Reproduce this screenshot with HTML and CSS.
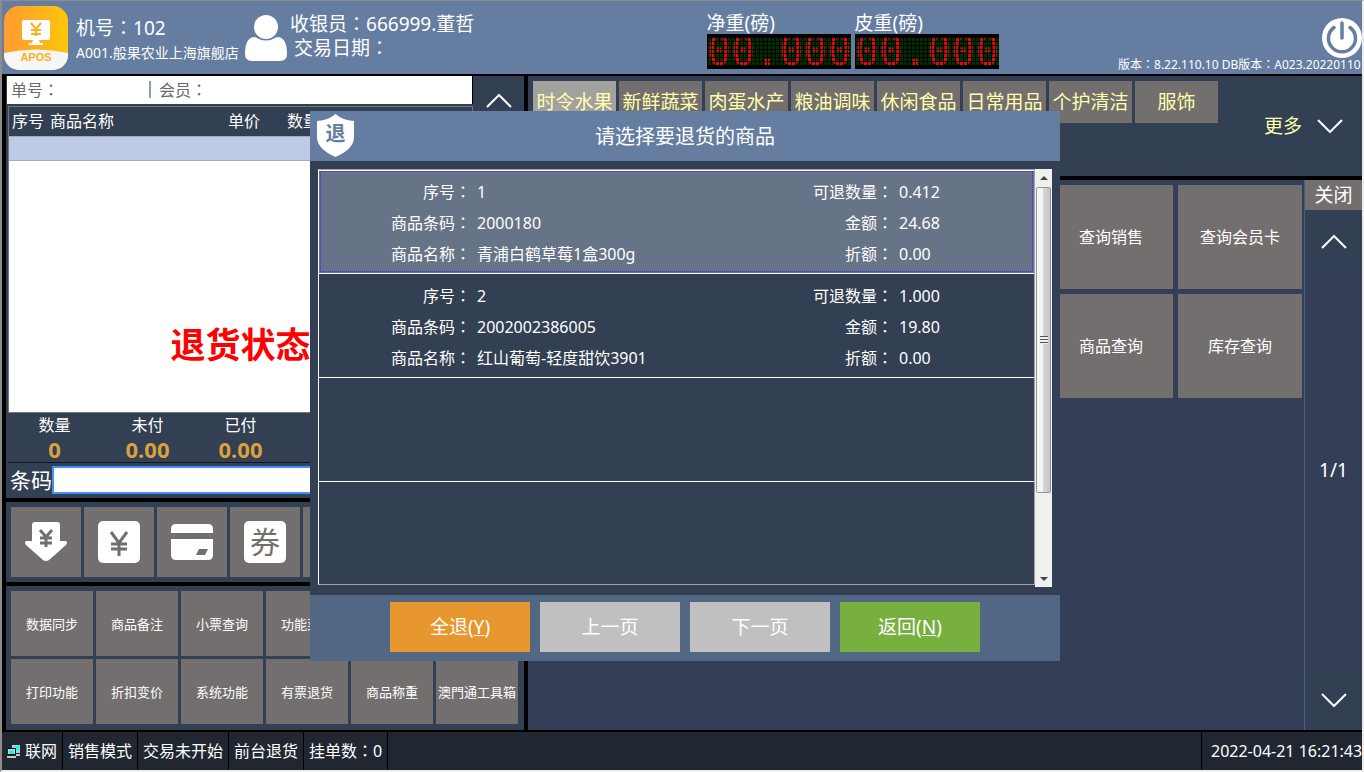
FILE: index.html
```html
<!DOCTYPE html>
<html lang="zh-CN">
<head>
  <meta charset="UTF-8">
  <meta name="viewport" content="width=device-width, initial-scale=1">
  <title>APOS 收银</title>
  <link rel="stylesheet" href="styles.css">
</head>
<body>
<div class="app">

  <header class="top">
    <svg class="logo" viewBox="0 0 64 64">
      <defs>
        <linearGradient id="g"><stop offset="0.1" stop-color="#ff9f2e"/><stop offset="1" stop-color="#ffc60a"/></linearGradient>
        <clipPath id="r"><rect width="64" height="64" rx="15"/></clipPath>
      </defs>
      <g clip-path="url(#r)">
        <rect width="64" height="64" fill="url(#g)"/>
        <path d="M0 47Q32 40 64 47V64H0Z" fill="#f6f6f6"/>
      </g>
      <rect x="18" y="14" width="28" height="20" rx="2" fill="#fff"/>
      <path d="M29 34h6l1 3h3v2H25v-2h3z" fill="#fff"/>
      <path d="M27 17l5 6 5-6M27 24h10M27 28h10M32 23v7" stroke="#fbb01c" stroke-width="2" fill="none"/>
      <text x="32" y="55" class="logo-text">APOS</text>
    </svg>
    <div class="machine">
      <div class="big">机号<i lang="zh-TW">：</i>102</div>
      <div class="shop">A001.般果农业上海旗舰店</div>
    </div>
    <svg class="user" viewBox="0 0 42 46">
      <circle cx="21" cy="12" r="12" fill="#fff"/>
      <path d="M10 22Q21 29 32 22Q42 22 42 39Q42 46 35 46H7Q0 46 0 39Q0 22 10 22Z" fill="#fff"/>
    </svg>
    <div class="cashier">
      <div class="big">收银员<i lang="zh-TW">：</i>666999.董哲</div>
      <div class="big date">交易日期<i lang="zh-TW">：</i></div>
    </div>
    <div class="weights">
      <div class="weight"><div class="big">净重(磅)</div><div class="led">00.000</div></div>
      <div class="weight"><div class="big">皮重(磅)</div><div class="led">00.000</div></div>
    </div>
    <div class="sys">
      <button class="power" aria-label="退出">
        <svg viewBox="0 0 40 40">
          <circle cx="20" cy="20" r="20" fill="#fff"/>
          <path d="M12 9.500A13.500 13.500 0 1 0 28 9.500M20 5V20" fill="none" stroke="#647da1" stroke-width="3.500" stroke-linecap="round"/>
        </svg>
      </button>
      <div class="version">版本<i lang="zh-TW">：</i>8.22.110.10 DB版本<i lang="zh-TW">：</i>A023.20220110</div>
    </div>
  </header>

  <main class="main">
    <section class="left">
      <div class="panel sale">
        <div class="order">
          <div class="order-info"><span class="order-no">单号<i lang="zh-TW">：</i></span><span class="order-vip">会员<i lang="zh-TW">：</i></span></div>
          <button class="up" aria-label="上移"><svg class="chev" viewBox="0 0 26 14"><path d="M1 13L13 1L25 13"/></svg></button>
        </div>
        <div class="goods">
          <table>
            <thead><tr><th class="c-no">序号</th><th class="c-name">商品名称</th><th class="c-price">单价</th><th>数量</th></tr></thead>
            <tbody><tr><td></td><td></td><td></td><td></td></tr></tbody>
          </table>
          <div class="state">退货状态</div>
        </div>
        <div class="totals">
          <div>数量<b>0</b></div>
          <div>未付<b>0.00</b></div>
          <div>已付<b>0.00</b></div>
        </div>
        <div class="scan">
          <label for="barcode">条码</label>
          <input type="text" id="barcode">
        </div>
      </div>

      <div class="panel pays">
        <button aria-label="现金"><svg viewBox="0 0 42 42">
          <path d="M7 4Q7 1 10 1H32Q35 1 35 4V20H41Q43 21 41 24L24 39Q21 41 18 39L1 24Q-1 21 1 20H7Z" fill="#fff"/>
          <path d="M15 9l6 7 6-7M15 17h12M15 22h12M21 16v10" fill="none" stroke="#736f6e" stroke-width="3"/></svg></button>
        <button aria-label="人民币"><svg viewBox="0 0 42 42">
          <rect width="42" height="42" rx="5" fill="#fff"/>
          <path d="M13 11l8 11 8-11M13 23h16M13 28h16M21 22v13" fill="none" stroke="#736f6e" stroke-width="3"/></svg></button>
        <button aria-label="银行卡"><svg viewBox="0 0 42 42">
          <path d="M0 12V8Q0 3 5 3H37Q42 3 42 8V12ZM0 18H42V34Q42 39 37 39H5Q0 39 0 34Z" fill="#fff"/>
          <path d="M28 28h9l-3 6h-9z" fill="#736f6e"/></svg></button>
        <button class="coupon"><span>券</span></button>
        <button aria-label="其他支付"></button>
      </div>

      <div class="panel funcs">
        <div class="func-row">
          <button>数据同步</button>
          <button>商品备注</button>
          <button>小票查询</button>
          <button>功能菜单</button>
        </div>
        <div class="func-row">
          <button>打印功能</button>
          <button>折扣变价</button>
          <button>系统功能</button>
          <button>有票退货</button>
          <button>商品称重</button>
          <button>澳門通工具箱</button>
        </div>
      </div>
    </section>

    <section class="right">
      <div class="cats">
        <nav class="tabs">
          <button class="on">时令水果</button>
          <button>新鲜蔬菜</button>
          <button>肉蛋水产</button>
          <button>粮油调味</button>
          <button>休闲食品</button>
          <button>日常用品</button>
          <button>个护清洁</button>
          <button>服饰</button>
        </nav>
        <button class="more">更多<svg class="chev" viewBox="0 0 26 14"><path d="M1 1L13 13L25 1"/></svg></button>
      </div>
      <div class="work">
        <div class="keys">
          <button class="k5">查询销售</button>
          <button>查询会员卡</button>
          <button class="k5">商品查询</button>
          <button>库存查询</button>
        </div>
        <div class="pager">
          <button class="close">关闭</button>
          <button class="prev" aria-label="上一页"><svg class="chev" viewBox="0 0 26 14"><path d="M1 13L13 1L25 13"/></svg></button>
          <span>1/1</span>
          <button class="next" aria-label="下一页"><svg class="chev" viewBox="0 0 26 14"><path d="M1 1L13 13L25 1"/></svg></button>
        </div>
      </div>
    </section>
  </main>

  <footer class="status">
    <div class="net">
      <svg viewBox="0 0 13 13" shape-rendering="crispEdges">
        <path d="M5 0h8v8H5z" fill="#c8c8c0"/>
        <path d="M7 1h5v5H7z" fill="#0ff"/>
        <path d="M1 3h8v7H1z" fill="#000"/>
        <path d="M1 4h7v5H1z" fill="#d8d8d0"/>
        <path d="M2 5h5v4H2z" fill="#0ff"/>
        <path d="M0 11h9v2H0zM9 9h4v2H9z" fill="#c8c8c0"/>
      </svg>联网</div>
    <div>销售模式</div>
    <div>交易未开始</div>
    <div>前台退货</div>
    <div>挂单数<i lang="zh-TW">：</i>0</div>
    <div class="clock">2022-04-21 16:21:43</div>
  </footer>
</div>

<!-- 退货弹窗 -->
<div class="mask">
  <div class="dialog" role="dialog" aria-labelledby="dlg-title">
    <div class="dlg-head">
      <div class="shield">
        <svg viewBox="0 0 37 43"><path d="M18.500 0Q25 6 37 7V23Q37 35 18.500 43Q0 35 0 23V7Q12 6 18.500 0Z" fill="#fff"/></svg>
        <span>退</span>
      </div>
      <div id="dlg-title">请选择要退货的商品</div>
    </div>
    <div class="dlg-body">
      <ul class="items">
        <li class="sel">
          <span>序号<i lang="zh-TW">：</i></span><b>1</b><span>可退数量<i lang="zh-TW">：</i></span><b>0.412</b>
          <span>商品条码<i lang="zh-TW">：</i></span><b>2000180</b><span>金额<i lang="zh-TW">：</i></span><b>24.68</b>
          <span>商品名称<i lang="zh-TW">：</i></span><b>青浦白鹤草莓1盒300g</b><span>折额<i lang="zh-TW">：</i></span><b>0.00</b>
        </li>
        <li>
          <span>序号<i lang="zh-TW">：</i></span><b>2</b><span>可退数量<i lang="zh-TW">：</i></span><b>1.000</b>
          <span>商品条码<i lang="zh-TW">：</i></span><b>2002002386005</b><span>金额<i lang="zh-TW">：</i></span><b>19.80</b>
          <span>商品名称<i lang="zh-TW">：</i></span><b>红山葡萄-轻度甜饮3901</b><span>折额<i lang="zh-TW">：</i></span><b>0.00</b>
        </li>
        <li></li>
        <li></li>
      </ul>
      <div class="bar">
        <button aria-label="向上滚动"><svg viewBox="0 0 8 4"><path d="M0 4L4 0L8 4Z"/></svg></button>
        <div class="thumb"><i></i></div>
        <button aria-label="向下滚动"><svg viewBox="0 0 8 4"><path d="M0 0L4 4L8 0Z"/></svg></button>
      </div>
    </div>
    <div class="dlg-foot">
      <button class="all">全退(<u>Y</u>)</button>
      <button>上一页</button>
      <button>下一页</button>
      <button class="back">返回(<u>N</u>)</button>
    </div>
  </div>
</div>
</body>
</html>
```
FILE: styles.css
```css
:root{
  --blue:#647da1;
  --dark:#333f52;
  --work:#343f57;
  --key:#736f6e;
  --gap:4px;
}

*{box-sizing:border-box;margin:0;padding:0;}

body{
  font-family:"Noto Sans","Noto Sans CJK SC",sans-serif;
  font-size:16px;
  line-height:24px;
  color:#fff;
  background:#ececec;
}

button{
  font:inherit;
  color:inherit;
  background:var(--key);
  border:none;
  white-space:nowrap;
  cursor:pointer;
}

svg{display:block;}

/* 冒号居中 */
i:lang(zh-TW){font-family:"Noto Sans CJK TC",sans-serif;font-style:normal;line-height:1;}
.chev{width:26px;height:14px;fill:none;stroke:#fff;stroke-width:2;}

.app{
  height:100vh;
  display:flex;
  flex-direction:column;
  background:#000;
  border:2px solid #8c8c8c;
  border-top-width:1px;
  border-right-color:#ececec;
  border-bottom-color:#ececec;
  overflow:hidden;
}

/* ---------- 顶部 ---------- */
.top{
  flex:0 0 73px;
  display:flex;
  background:var(--blue);
  white-space:nowrap;
}
.big{font-size:19px;line-height:24px;}
.logo{width:64px;height:64px;margin:5px 8px 0 2px;}
.logo-text{
  font:bold 11px "Liberation Sans",sans-serif;
  fill:#fbb01c;
  text-anchor:middle;
}
.machine{width:169px;padding-top:15px;}
.shop{font-size:14px;line-height:26px;}
.user{width:42px;height:46px;margin-top:14px;}
.cashier{width:200px;padding:11px 0 0 3px;}
.date{padding-left:4px;}
.weights{
  flex:1;
  display:flex;
  justify-content:center;
  gap:4px;
  padding:10px 0 0 100px;
}
.led{
  position:relative;
  width:144px;
  height:35px;
  margin-top:-1px;
  background:#003000;
  color:#f00;
  font:40px/35px "DejaVu Sans Mono",monospace;
}
/* 点阵网格盖在数字上 */
.led::after{
  content:"";
  position:absolute;
  inset:0;
  background:
    linear-gradient(#000 3px,transparent 3px,transparent 31px,#000 31px),
    repeating-linear-gradient(90deg,#000 0 1px,transparent 1px 4px),
    repeating-linear-gradient(#000 0 1px,transparent 1px 4px);
  background-position:0 0,0 0,0 3px;
  background-repeat:no-repeat;
}
.sys{
  width:244px;
  display:flex;
  flex-direction:column;
}
.power{
  align-self:flex-end;
  width:40px;
  height:40px;
  margin-top:17px;
  background:none;
}
.version{font-size:12px;line-height:12px;}

/* ---------- 主体 ---------- */
.main{
  flex:1;
  display:grid;
  grid-template-columns:518px 1fr;
  gap:var(--gap);
  margin:2px 0;
  padding-left:var(--gap);
  min-height:0;
}
.left,.right{
  display:flex;
  flex-direction:column;
  gap:var(--gap);
  min-width:0;
}
.panel{background:var(--dark);}

.order{display:flex;height:28px;}
.order-info{
  flex:1;
  margin-left:1px;
  padding-left:4px;
  line-height:28px;
  background:#fff;
  color:#6a6a6a;
  border-right:1px solid #000;
}
.order-no{display:inline-block;width:138px;}
.order-vip{border-left:2px solid #8a9fb5;padding-left:8px;line-height:16px;display:inline-block;}
.up{
  display:flex;
  align-items:center;
  justify-content:center;
  width:51px;
  height:49px;
  background:var(--dark);
}

.sale{flex:1;display:flex;flex-direction:column;}
.goods{
  flex:1;
  display:flex;
  flex-direction:column;
  margin:2px 51px 0 2px;
  border:1px solid #777;
  background:#fff;
}
table{width:100%;border-collapse:collapse;table-layout:fixed;}
th{
  height:29px;
  font-weight:normal;
  text-align:left;
  padding-left:3px;
  background:var(--dark);
}
td{height:24px;background:#bdcbe6;border:solid #aaa;border-width:1px 0;}
.c-no{width:38px;}
.c-name{width:178px;}
.c-price{width:59px;}
.state{
  flex:1;
  display:flex;
  align-items:center;
  justify-content:center;
  padding-top:117px;
  color:#f00;
  font-size:35px;
  font-weight:bold;
}
.totals{
  display:grid;
  grid-template-columns:repeat(5,93px);
  height:50px;
  margin:0 2px;
  border-bottom:1px solid #15191f;
  text-align:center;
}
.totals b{display:block;color:#dba13c;font-size:22px;}
.scan{display:flex;height:35px;padding:3px 3px 4px 4px;}
.scan label{width:42px;font-size:21px;line-height:28px;}
.scan input{flex:1;border:2px solid #3a94ff;background:#fff;outline:none;font:inherit;}

.pays{display:flex;gap:3px;padding:5px;height:80px;}
.pays button{width:70px;display:flex;align-items:center;justify-content:center;}
.pays svg{width:42px;height:42px;}
.coupon span{
  width:42px;
  height:42px;
  border-radius:5px;
  background:#fff;
  color:var(--key);
  font-size:30px;
  line-height:42px;
}

.funcs{
  display:flex;
  flex-direction:column;
  gap:3px;
  height:144px;
  padding:5px;
  font-size:13px;
}
.func-row{display:grid;grid-template:65px / repeat(6,82px);gap:3px;}

/* ---------- 右侧 ---------- */
.cats{
  display:flex;
  justify-content:space-between;
  height:100px;
  padding:5px;
  background:var(--dark);
  font-size:19px;
  color:#ffffb0;
}
.tabs{display:flex;gap:3px;}
.tabs button{width:83px;height:42px;}
.tabs .on{background:#a3a19e;}
.more{display:flex;align-items:center;gap:15px;padding-right:14px;background:none;}

.work{flex:1;display:flex;background:var(--work);}
.keys{
  flex:1;
  display:grid;
  grid-template-columns:repeat(6,1fr);
  grid-template-rows:104px 104px;
  gap:5px;
  padding:5px 2px 5px 5px;
}
.k5{grid-column:5;}
.pager{
  width:58px;
  display:flex;
  flex-direction:column;
  align-items:center;
  border-left:1px solid #4a5d86;
  font-size:19px;
}
.pager button{width:100%;}
.pager .close{height:30px;}
.prev,.next{
  display:flex;
  align-items:center;
  justify-content:center;
  height:60px;
}
.pager .prev,.pager .next{background:var(--dark);}
.prev{padding-top:4px;}
.pager span{flex:1;display:flex;align-items:center;}

/* ---------- 状态栏 ---------- */
.status{
  flex:0 0 38px;
  display:flex;
  background:#202731;
  line-height:38px;
  white-space:nowrap;
}
.status div{padding:0 5px;border-right:1px solid #000;}
.status .net{display:flex;align-items:center;gap:5px;}
.net svg{width:13px;height:13px;}
.status .clock{
  width:161px;
  margin-left:auto;
  padding:0 0 0 9px;
  border:none;
  border-left:1px solid #000;
}

/* ---------- 弹窗 ---------- */
.mask{
  position:fixed;
  inset:0;
  display:flex;
  align-items:center;
  justify-content:center;
  padding-left:6px;
}
.dialog{width:750px;background:var(--dark);}
.dlg-head{
  position:relative;
  height:50px;
  line-height:52px;
  background:var(--blue);
  font-size:20px;
  text-align:center;
}
.shield{position:absolute;left:7px;top:3px;width:37px;height:43px;}
.shield span{
  position:absolute;
  inset:0;
  color:var(--blue);
  font-weight:bold;
  line-height:40px;
}
.dlg-body{display:flex;padding:8px;}
.items{
  flex:1;
  list-style:none;
  height:416px;
  border:1px solid #a0a0a0;
  border-left-color:#fff;
}
.items li{
  display:grid;
  grid-template-columns:152px 1fr 80px 135px;
  grid-auto-rows:31px;
  column-gap:6px;
  height:104px;
  padding-top:7px;
  line-height:31px;
  white-space:nowrap;
  border-top:1px solid #fff;
}
.items li:first-child{height:103px;padding-top:6px;}
.items .sel{background:#677386;outline:1px dotted #4a20ff;outline-offset:-2px;}
.items span{text-align:right;}
.items b{font-weight:normal;}
.bar{
  width:17px;
  height:418px;
  display:flex;
  flex-direction:column;
  background:#f0f0f0;
}
.bar button{
  height:17px;
  flex:none;
  display:flex;
  align-items:center;
  justify-content:center;
  background:none;
}
.bar svg{width:8px;height:4px;fill:#444;}
.bar button:last-child{margin-top:auto;}
.thumb{
  flex:0 0 306px;
  display:flex;
  align-items:center;
  justify-content:center;
  margin:1px 1px 0;
  border:1px solid #979797;
  border-radius:2px;
  background:linear-gradient(90deg,#f5f5f5 45%,#d6d6da 50%,#c4c4ca);
}
.thumb i{
  width:8px;
  height:8px;
  background:repeating-linear-gradient(#555 0 1px,#eee 1px 3px);
}
.dlg-foot{
  display:flex;
  justify-content:center;
  gap:10px;
  height:66px;
  padding:7px 0 9px;
  background:#526783;
  font-size:19px;
}
.dlg-foot button{width:140px;background:#c0c0c0;}
.dlg-foot .all{background:#e8962e;}
.dlg-foot .back{background:#78b03f;}
```
